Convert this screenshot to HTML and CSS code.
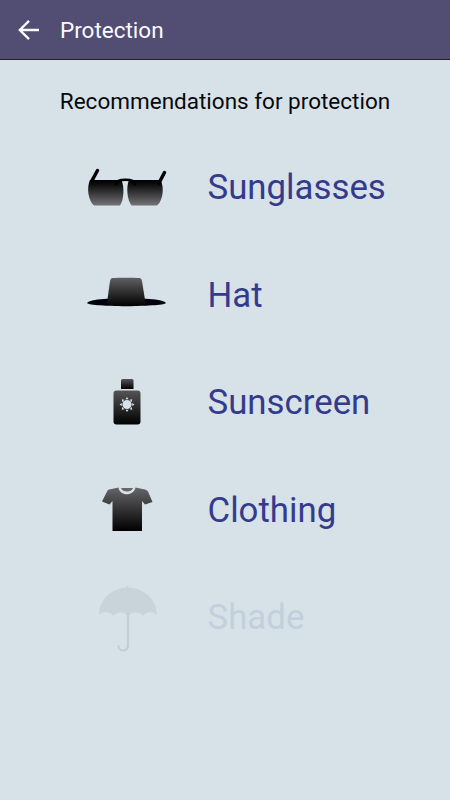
FILE: index.html
```html
<!DOCTYPE html>
<html lang="en">
<head>
<meta charset="utf-8">
<title>Protection</title>
<link rel="stylesheet" href="styles.css">
</head>
<body>
<header class="bar">
  <svg class="back" viewBox="0 0 24 24" fill="none" stroke="#fafaff" stroke-width="2.4"><path d="M22 12H3.5M12 2.8L2.8 12L12 21.2"/></svg>
  <span class="title">Protection</span>
</header>
<main>
  <h1 class="heading"><span>Recommendations for protection</span></h1>
  <ul class="list">
    <li class="row">
      <svg class="icon" viewBox="80 142 96 90">
        <defs><linearGradient id="lens" x1="0" y1="0" x2="0" y2="1"><stop offset="0" stop-color="#000"/><stop offset=".2" stop-color="#101010"/><stop offset="1" stop-color="#747376"/></linearGradient></defs>
        <path fill="url(#lens)" d="M90 180H121.500C124.500 187 124 200 120 205.500H94C88 201 86.500 187 90 180Z"/>
        <path fill="url(#lens)" d="M129 180H160.500C164.500 187 163 201 157 205.500H131.500C127 200 126 187 129 180Z"/>
        <path d="M91.500 181.500L97.500 170.500M159 183L164.500 172.500" stroke="#000" stroke-width="3.500" stroke-linecap="round"/>
        <path d="M116 184C117 178.300 134 178.300 135 184" fill="none" stroke="#000" stroke-width="2.600" stroke-linecap="round"/>
      </svg>
      <span class="name">Sunglasses</span>
    </li>
    <li class="row">
      <svg class="icon" viewBox="80 249 96 90">
        <defs><linearGradient id="crown" x1="0" y1="0" x2="0" y2="1"><stop offset="0" stop-color="#606063"/><stop offset="1" stop-color="#000"/></linearGradient></defs>
        <path fill="#00000c" d="M87 303C89 300 99 299 107 298.700H146C154 299 164 300 166 303C164 305.300 144 306 126 306S89 305.300 87 303Z"/>
        <path fill="url(#crown)" d="M112 278C119 277.500 133 277.500 140 278Q141.500 278.500 142 281L145.500 303Q145 306 126.500 306.300Q108 306 107 303L110 281Q110.500 278.500 112 278Z"/>
      </svg>
      <span class="name">Hat</span>
    </li>
    <li class="row">
      <svg class="icon" viewBox="80 357 96 90">
        <defs><linearGradient id="bottle" x1="0" y1="0" x2="0" y2="1"><stop offset="0" stop-color="#555557"/><stop offset="1" stop-color="#000"/></linearGradient></defs>
        <path fill="url(#bottle)" d="M122.500 379H132Q133.500 379 133.500 380.500V389H121V380.500Q121 379 122.500 379Z"/>
        <rect x="113.500" y="390.500" width="27" height="34" rx="3" fill="url(#bottle)"/>
        <g transform="translate(127 404.500)" fill="#d7e2e8">
          <circle r="4.600"/>
          <path d="M0-7.500L1.500-5.200H-1.500ZM0 7.500L1.500 5.200H-1.500ZM7.500 0L5.200-1.500V1.500ZM-7.500 0L-5.200-1.500V1.500Z"/>
          <path transform="rotate(45)" d="M0-7.500L1.500-5.200H-1.500ZM0 7.500L1.500 5.200H-1.500ZM7.500 0L5.200-1.500V1.500ZM-7.500 0L-5.200-1.500V1.500Z"/>
        </g>
      </svg>
      <span class="name">Sunscreen</span>
    </li>
    <li class="row">
      <svg class="icon" viewBox="80 464 96 90">
        <defs><linearGradient id="shirt" x1="0" y1="0" x2="0" y2="1"><stop offset="0" stop-color="#666669"/><stop offset="1" stop-color="#000"/></linearGradient></defs>
        <path fill="url(#shirt)" d="M118.500 487.500C119.500 496.500 134 496.500 135.500 487.500L145 489.500Q147 490 148 491.500L152.500 502L145 504.500L142 501V531H112.500V501L109.500 504.500L102 501.500L107 491.500Q107.500 490 109 489.500Z"/>
        <path fill="#67676a" d="M121 488H133C131.500 492.800 122.500 492.800 121 488Z"/>
      </svg>
      <span class="name">Clothing</span>
    </li>
    <li class="row disabled">
      <svg class="icon" viewBox="80 572 96 90">
        <path fill="#c9d4da" d="M99 615C99 599 112 588.500 126.500 587.500V586H128.500V587.500C145 588.500 157 600 157 615Q152 610.500 147.500 612.500Q144.500 613.500 143 616Q140.500 612.500 135 612.500Q130.500 613 128 616Q125.500 613 121 612.500Q116 612.500 113.500 616Q111 612.500 106.500 612Q102 611.500 99 615Z"/>
        <path d="M128 614V645C128 652 119 652 118.500 646" fill="none" stroke="#c3ced4" stroke-width="2.200" stroke-linecap="round"/>
      </svg>
      <span class="name">Shade</span>
    </li>
  </ul>
</main>
</body>
</html>
```
FILE: styles.css
```css
* { box-sizing: border-box; }
body {
  margin: 0;
  min-height: 800px;
  background: #d7e2e8;
  font-family: Roboto, "Liberation Sans", sans-serif;
}
.bar {
  display: flex;
  align-items: center;
  height: 60px;
  padding-left: 17px;
  background: #514d73;
  border-bottom: 1px solid #1c1b55;
  color: #fafaff;
}
.back { width: 24px; height: 24px; margin-right: 19px; }
.title { font-size: 22.5px; line-height: 28px; }
.heading {
  margin: 0;
  height: 73px;
  padding-top: 26px;
  text-align: center;
  font-size: 22.5px;
  line-height: 30px;
  font-weight: 400;
  color: #08080b;
}
.list { margin: 0; padding: 0; list-style: none; }
.row {
  display: flex;
  align-items: center;
  height: 107.5px;
  padding-left: 80px;
}
.icon { width: 96px; height: 90px; margin-right: 31.5px; }
.name { padding-top: 1px; font-size: 34.8px; line-height: 42px; color: #343b8d; }
.disabled .name { color: #c2cfdc; }
```
